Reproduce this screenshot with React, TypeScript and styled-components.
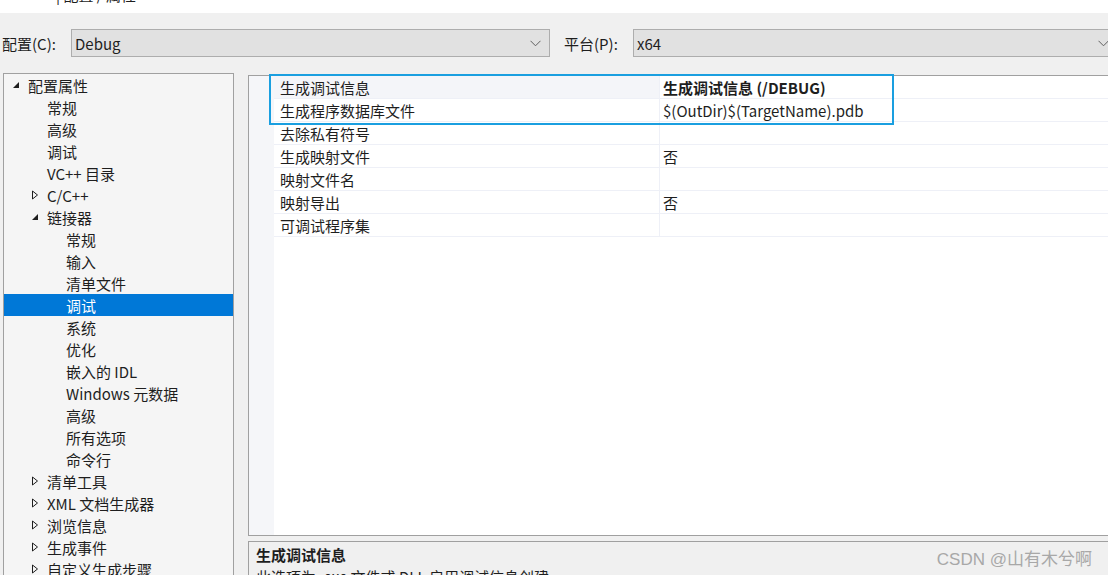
import React from 'react';
import styled, { createGlobalStyle } from 'styled-components';

const GlobalStyle = createGlobalStyle`
  html, body {
    margin: 0;
    padding: 0;
    overflow: hidden;
  }
  body {
    font-family: "Microsoft YaHei", "Noto Sans CJK SC", "Noto Sans", sans-serif;
    font-size: 15px;
    color: #1e1e1e;
  }
`;

interface TreeNode {
  label: string;
  level: number;
  toggle?: 'open' | 'closed';
  selected?: boolean;
}

const treeNodes: TreeNode[] = [
  { label: '配置属性', level: 0, toggle: 'open' },
  { label: '常规', level: 1 },
  { label: '高级', level: 1 },
  { label: '调试', level: 1 },
  { label: 'VC++ 目录', level: 1 },
  { label: 'C/C++', level: 1, toggle: 'closed' },
  { label: '链接器', level: 1, toggle: 'open' },
  { label: '常规', level: 2 },
  { label: '输入', level: 2 },
  { label: '清单文件', level: 2 },
  { label: '调试', level: 2, selected: true },
  { label: '系统', level: 2 },
  { label: '优化', level: 2 },
  { label: '嵌入的 IDL', level: 2 },
  { label: 'Windows 元数据', level: 2 },
  { label: '高级', level: 2 },
  { label: '所有选项', level: 2 },
  { label: '命令行', level: 2 },
  { label: '清单工具', level: 1, toggle: 'closed' },
  { label: 'XML 文档生成器', level: 1, toggle: 'closed' },
  { label: '浏览信息', level: 1, toggle: 'closed' },
  { label: '生成事件', level: 1, toggle: 'closed' },
  { label: '自定义生成步骤', level: 1, toggle: 'closed' },
];

interface Property {
  name: string;
  value: string;
  bold?: boolean;
  active?: boolean;
}

const properties: Property[] = [
  { name: '生成调试信息', value: '生成调试信息 (/DEBUG)', bold: true, active: true },
  { name: '生成程序数据库文件', value: '$(OutDir)$(TargetName).pdb' },
  { name: '去除私有符号', value: '' },
  { name: '生成映射文件', value: '否' },
  { name: '映射文件名', value: '' },
  { name: '映射导出', value: '否' },
  { name: '可调试程序集', value: '' },
];

const Chevron = () => (
  <svg width="11" height="7" viewBox="0 0 11 7">
    <path d="M0.5 0.8 L5.5 5.8 L10.5 0.8" fill="none" stroke="#606060" strokeWidth="1" />
  </svg>
);

const Triangle = ({ open }: { open: boolean }) =>
  open ? (
    <svg width="8" height="8" viewBox="0 0 8 8">
      <path d="M7 1 L7 7 L1 7 Z" fill="#1e1e1e" />
    </svg>
  ) : (
    <svg width="8" height="10" viewBox="0 0 8 10">
      <path d="M1.5 1 L6.5 5 L1.5 9 Z" fill="none" stroke="#1e1e1e" strokeWidth="1" />
    </svg>
  );

export default function App() {
  return (
    <Page>
      <GlobalStyle />
      <TitleStrip>
        <span>| 配置 / 属性</span>
      </TitleStrip>

      <ConfigBar>
        <Label>配置(C):</Label>
        <Select $width={479}>
          <span>Debug</span>
          <Chevron />
        </Select>
        <Label $left={14}>平台(P):</Label>
        <Select $grow>
          <span>x64</span>
          <Chevron />
        </Select>
      </ConfigBar>

      <Main>
        <Tree>
          {treeNodes.map((n, i) => (
            <TreeRow key={i} $level={n.level} $selected={!!n.selected}>
              <Toggle>{n.toggle && <Triangle open={n.toggle === 'open'} />}</Toggle>
              {n.label}
            </TreeRow>
          ))}
        </Tree>

        <RightColumn>
          <Grid>
            <Gutter />
            <Rows>
              {properties.map((p, i) => (
                <PropRow key={i}>
                  <NameCell $active={!!p.active}>{p.name}</NameCell>
                  <ValueCell $bold={!!p.bold}>{p.value}</ValueCell>
                </PropRow>
              ))}
            </Rows>
            <Highlight />
          </Grid>
          <Description>
            <DescTitle>生成调试信息</DescTitle>
            <DescText>此选项为 .exe 文件或 DLL 启用调试信息创建。</DescText>
            <Watermark>CSDN @山有木兮啊</Watermark>
          </Description>
        </RightColumn>
      </Main>
    </Page>
  );
}

const Page = styled.div`
  width: 1108px;
  height: 575px;
  overflow: hidden;
  background: #f0f0f0;
  display: flex;
  flex-direction: column;
`;

const TitleStrip = styled.div`
  height: 13px;
  background: #ffffff;
  overflow: hidden;
  flex-shrink: 0;

  span {
    display: block;
    margin: -15px 0 0 56px;
    font-size: 15px;
    line-height: 20px;
    color: #1e1e1e;
  }
`;

const ConfigBar = styled.div`
  height: 60px;
  flex-shrink: 0;
  display: flex;
  align-items: center;
  padding-left: 2px;
`;

const Label = styled.span<{ $left?: number }>`
  margin-left: ${p => p.$left ?? 0}px;
  width: 66px;
  flex-shrink: 0;
  font-size: 15px;
  color: #1e1e1e;
`;

const Select = styled.div<{ $width?: number; $grow?: boolean }>`
  box-sizing: border-box;
  height: 28px;
  ${p => (p.$grow ? 'flex: 1; margin-right: -10px;' : `width: ${p.$width}px;`)}
  margin-left: 3px;
  background: #e1e1e1;
  border: 1px solid #adadad;
  display: flex;
  align-items: center;
  justify-content: space-between;
  padding: 0 8px 0 3px;
  font-size: 15px;
  color: #1e1e1e;
`;

const Main = styled.div`
  flex: 1;
  display: flex;
  gap: 14px;
  padding-left: 3px;
  min-height: 0;
`;

const Tree = styled.div`
  box-sizing: border-box;
  width: 231px;
  flex-shrink: 0;
  height: 520px;
  background: #f5f5f5;
  border: 1px solid #a0a0a0;
`;

const TreeRow = styled.div<{ $level: number; $selected: boolean }>`
  height: 22px;
  display: flex;
  align-items: center;
  padding-left: ${p => 5 + p.$level * 19}px;
  background: ${p => (p.$selected ? '#0078d7' : 'transparent')};
  color: ${p => (p.$selected ? '#ffffff' : '#1e1e1e')};
  font-size: 15px;
  white-space: nowrap;
`;

const Toggle = styled.span`
  width: 19px;
  display: flex;
  align-items: center;
  justify-content: flex-start;
  padding-left: 3px;
  box-sizing: border-box;
`;

const RightColumn = styled.div`
  flex: 1;
  display: flex;
  flex-direction: column;
  gap: 5px;
  padding-top: 2px;
  min-width: 0;
`;

const Grid = styled.div`
  position: relative;
  box-sizing: border-box;
  height: 461px;
  flex-shrink: 0;
  background: #ffffff;
  border: 1px solid #a0a0a0;
  border-right: none;
  display: flex;
`;

const Gutter = styled.div`
  width: 25px;
  flex-shrink: 0;
  background: #f5f6f9;
`;

const Rows = styled.div`
  flex: 1;
`;

const PropRow = styled.div`
  height: 23px;
  display: flex;
  border-bottom: 1px solid #eef0f7;
  box-sizing: border-box;
`;

const NameCell = styled.div<{ $active: boolean }>`
  box-sizing: border-box;
  width: 386px;
  flex-shrink: 0;
  padding-left: 6px;
  display: flex;
  align-items: center;
  background: ${p => (p.$active ? '#f4f5f9' : '#ffffff')};
  border-right: 1px solid #eef0f7;
  font-size: 15px;
  color: #1e1e1e;
`;

const ValueCell = styled.div<{ $bold: boolean }>`
  flex: 1;
  padding-left: 3px;
  display: flex;
  align-items: center;
  font-size: 15px;
  font-weight: ${p => (p.$bold ? 700 : 400)};
  color: #1e1e1e;
  white-space: nowrap;
`;

const Highlight = styled.div`
  position: absolute;
  left: 20px;
  top: -2px;
  width: 625px;
  height: 51px;
  box-sizing: border-box;
  border: 2px solid #1a9fe0;
  pointer-events: none;
`;

const Description = styled.div`
  position: relative;
  flex: 1;
  border-top: 1px solid #a0a0a0;
  border-left: 1px solid #a0a0a0;
  background: #f0f0f0;
  padding: 2px 0 0 7px;
`;

const DescTitle = styled.div`
  font-size: 15px;
  font-weight: 700;
  line-height: 22px;
  color: #1e1e1e;
`;

const DescText = styled.div`
  font-size: 15px;
  line-height: 22px;
  color: #1e1e1e;
  white-space: nowrap;
`;

const Watermark = styled.div`
  position: absolute;
  right: 16px;
  top: 3px;
  font-size: 17px;
  color: #a8a8a8;
  font-family: "Liberation Sans", "Noto Sans CJK SC", sans-serif;
`;
